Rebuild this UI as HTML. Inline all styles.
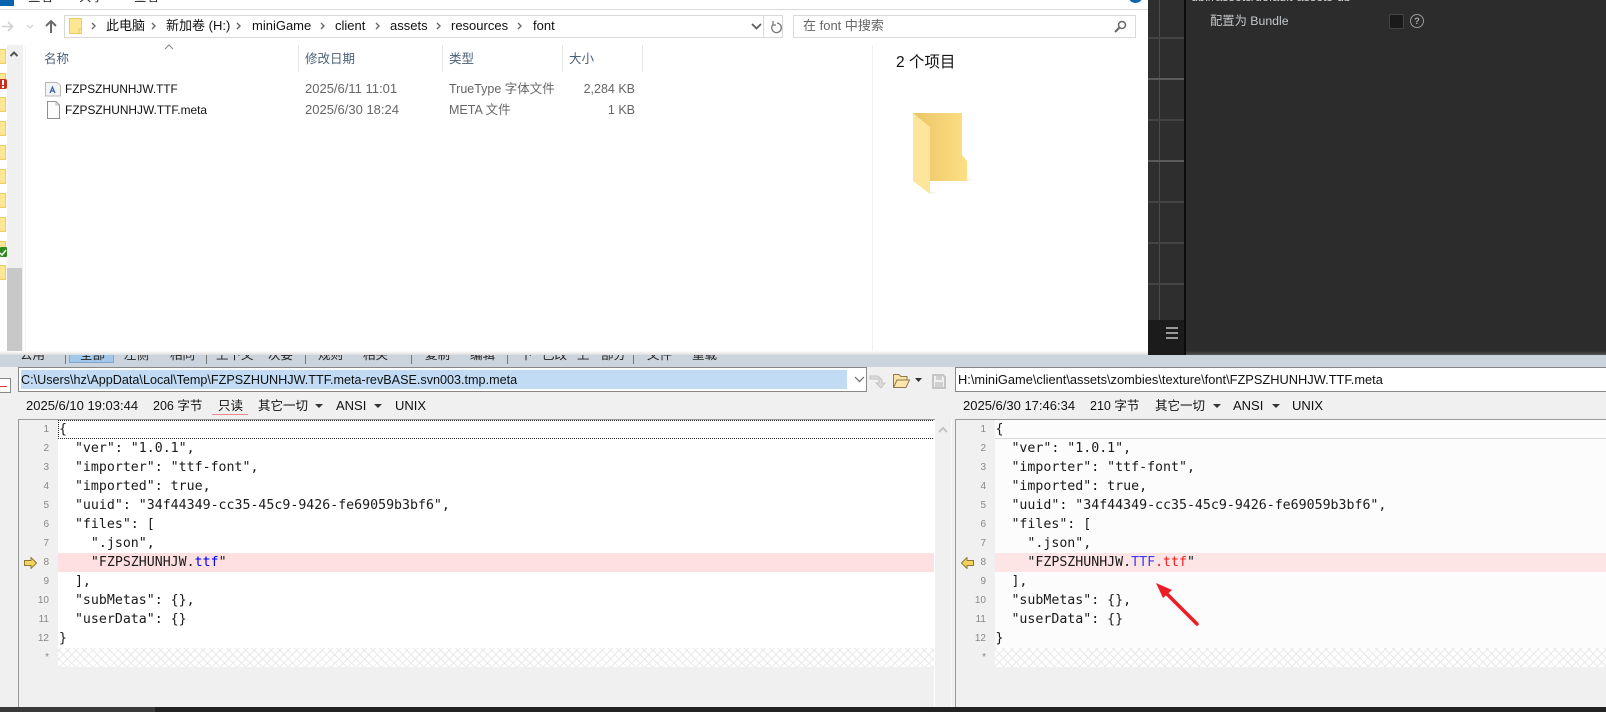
<!DOCTYPE html>
<html><head><meta charset="utf-8"><style>
html,body{margin:0;padding:0;width:1606px;height:712px;overflow:hidden;background:#fff}
body{position:relative;font-family:"Liberation Sans","Noto Sans CJK SC",sans-serif;font-size:12.5px;color:#111}
.a{position:absolute}
.t{position:absolute;white-space:pre;line-height:16px;height:16px}
.g{color:#666}
.h{color:#4c607a}
.c{position:absolute;white-space:pre;font-family:"DejaVu Sans Mono","Liberation Mono",monospace;font-size:13.26px;line-height:19px;height:19px;color:#1a1a1a}
.n{position:absolute;width:20px;text-align:right;font-size:10px;line-height:19px;color:#888}
.s{position:absolute;top:355px;height:7px;overflow:hidden;font-size:12.5px;line-height:0;white-space:pre;color:#222}
.sep{position:absolute;top:355px;width:1px;height:9px;background:#777}
.hatch{position:absolute;height:19px;background-color:#fff;background-image:repeating-linear-gradient(45deg,#e9e9e9 0 1px,transparent 1px 6px),repeating-linear-gradient(-45deg,#e9e9e9 0 1px,transparent 1px 6px)}
.cut{position:absolute;top:0;height:3px;overflow:hidden;white-space:pre;font-size:12.5px;line-height:16px}
.cut span{position:relative;top:-11px;display:block}
.fo{position:absolute;left:0;width:6px;height:15px;background:#fde694;border:solid #eccb62;border-width:1px 1px 1px 0;box-sizing:border-box}
</style></head><body>

<!-- explorer -->
<div class="a" style="left:0;top:0;width:1148px;height:355px;background:#fff"></div>
<div class="a" style="left:0;top:0;width:14px;height:6px;background:#0a64ad"></div>
<div class="cut" style="left:28px;color:#222"><span>查看</span></div>
<div class="cut" style="left:79px;color:#222"><span>共享</span></div>
<div class="cut" style="left:134px;color:#222"><span>查看</span></div>
<div class="a" style="left:0;top:9px;width:1148px;height:1px;background:#d9d9d9"></div>
<div class="a" style="left:1128px;top:-12px;width:15px;height:15px;border-radius:50%;background:#0a64ad"></div>

<svg class="a" style="left:0;top:15px" width="60" height="24" viewBox="0 0 60 24" fill="none">
<path d="M2 11.500H12M8 7l4.500 4.500L8 16" stroke="#cfcfcf" stroke-width="1.600"/>
<path d="M27 10l3 3 3-3" stroke="#d5d5d5" stroke-width="1.300"/>
<path d="M51 18V6M46 11l5-5 5 5" stroke="#6b6b6b" stroke-width="2"/>
</svg>
<div class="a" style="left:64px;top:15px;width:717px;height:21px;border:1px solid #d9d9d9"></div>
<div class="a" style="left:763px;top:16px;width:1px;height:21px;background:#d9d9d9"></div>
<svg class="a" style="left:69px;top:18px" width="13" height="16" viewBox="0 0 13 16"><rect x=".5" y=".5" width="12" height="15" fill="#fde694" stroke="#eccb62"/><path d="M10 15.500V11h2.500" fill="none" stroke="#eccb62"/></svg>
<svg class="a" style="left:88px;top:20px" width="470" height="12" viewBox="0 0 470 12" fill="none" stroke="#666" stroke-width="1.400">
<path d="M4 3l3 3-3 3M64 3l3 3-3 3M149 3l3 3-3 3M233 3l3 3-3 3M288 3l3 3-3 3M349 3l3 3-3 3M430 3l3 3-3 3"/>
</svg>
<div class="t" style="left:106px;top:18px;font-size:13px">此电脑</div>
<div class="t" style="left:166px;top:18px;font-size:13px">新加卷 (H:)</div>
<div class="t" style="left:252px;top:18px;font-size:13px">miniGame</div>
<div class="t" style="left:335px;top:18px;font-size:13px">client</div>
<div class="t" style="left:390px;top:18px;font-size:13px">assets</div>
<div class="t" style="left:451px;top:18px;font-size:13px">resources</div>
<div class="t" style="left:533px;top:18px;font-size:13px">font</div>
<svg class="a" style="left:750px;top:20px" width="34" height="14" viewBox="0 0 34 14" fill="none">
<path d="M2 4l4.500 4.500L11 4" stroke="#555" stroke-width="1.600"/>
<path d="M27 3a4.800 4.800 0 1 1-4 1.500M23 1v4h3" stroke="#777" stroke-width="1.300"/>
</svg>
<div class="a" style="left:793px;top:15px;width:341px;height:21px;border:1px solid #d9d9d9"></div>
<div class="t g" style="left:803px;top:18px;font-size:13px">在 font 中搜索</div>
<svg class="a" style="left:1113px;top:20px" width="14" height="14" viewBox="0 0 14 14" fill="none" stroke="#666"><circle cx="9" cy="5" r="3.500" stroke-width="1.500"/><path d="M6.500 7.500L2 12" stroke-width="2"/></svg>

<!-- left sidebar -->
<div class="fo" style="top:49px"></div>
<div class="fo" style="top:73px"></div>
<div class="a" style="left:0;top:79px;width:7px;height:10px;background:#c8321c;border-radius:0 2px 2px 0"></div>
<div class="a" style="left:2px;top:80px;width:2px;height:5px;background:#fff"></div>
<div class="a" style="left:2px;top:86px;width:2px;height:2px;background:#fff"></div>
<div class="fo" style="top:97px"></div>
<div class="fo" style="top:121px"></div>
<div class="fo" style="top:145px"></div>
<div class="fo" style="top:169px"></div>
<div class="fo" style="top:193px"></div>
<div class="fo" style="top:217px"></div>
<div class="fo" style="top:241px"></div>
<svg class="a" style="left:0;top:247px" width="7" height="10" viewBox="0 0 7 10"><rect width="7" height="10" rx="1" fill="#2d8a1f"/><path d="M0 6l2 2 4-5" fill="none" stroke="#fff" stroke-width="1.500"/></svg>
<div class="fo" style="top:265px"></div>
<div class="a" style="left:7px;top:45px;width:16px;height:310px;background:#f0f0f0"></div>
<div class="a" style="left:7px;top:268px;width:15px;height:87px;background:#c8c8c8"></div>
<svg class="a" style="left:9px;top:50px" width="10" height="8" viewBox="0 0 10 8" fill="none"><path d="M1.500 6l3.500-3.500L8.500 6" stroke="#555" stroke-width="2"/></svg>
<div class="a" style="left:25px;top:45px;width:1px;height:310px;background:#f2f2f2"></div>

<!-- headers -->
<svg class="a" style="left:164px;top:44px" width="10" height="6" viewBox="0 0 10 6" fill="none"><path d="M1 5l4-4 4 4" stroke="#888"/></svg>
<div class="t h" style="left:44px;top:51px;font-size:12.5px">名称</div>
<div class="t h" style="left:305px;top:51px;font-size:12.5px">修改日期</div>
<div class="t h" style="left:449px;top:51px;font-size:12.5px">类型</div>
<div class="t h" style="left:569px;top:51px;font-size:12.5px">大小</div>
<div class="a" style="left:298px;top:45px;width:1px;height:27px;background:#e5e5e5"></div>
<div class="a" style="left:442px;top:45px;width:1px;height:27px;background:#e5e5e5"></div>
<div class="a" style="left:562px;top:45px;width:1px;height:27px;background:#e5e5e5"></div>
<div class="a" style="left:642px;top:45px;width:1px;height:27px;background:#e5e5e5"></div>
<div class="a" style="left:872px;top:45px;width:1px;height:310px;background:#f0f0f0"></div>

<!-- rows -->
<svg class="a" style="left:45px;top:81px" width="16" height="16" viewBox="0 0 16 16"><path d="M.5 1.500H12l3.500 3V15H.5z" fill="#f4f4f6" stroke="#b8b8b8"/><path d="M5 12l2.500-6L10 12M6 10h3" fill="none" stroke="#3a5fb0" stroke-width="1.200"/></svg>
<svg class="a" style="left:47px;top:101px" width="13" height="18" viewBox="0 0 13 18"><path d="M.5.500H9l3.500 3.500V17.500H.5z" fill="#fcfcfc" stroke="#8f8f8f"/><path d="M9 .5V4h3.500" fill="none" stroke="#bbb"/></svg>
<div class="t" style="left:65px;top:81px;font-size:11.8px">FZPSZHUNHJW.TTF</div>
<div class="t" style="left:65px;top:102px;font-size:11.9px">FZPSZHUNHJW.TTF.meta</div>
<div class="t g" style="left:305px;top:81px;font-size:13px">2025/6/11 11:01</div>
<div class="t g" style="left:305px;top:102px;font-size:13px">2025/6/30 18:24</div>
<div class="t g" style="left:449px;top:81px">TrueType 字体文件</div>
<div class="t g" style="left:449px;top:102px">META 文件</div>
<div class="t g" style="left:560px;top:81px;width:75px;text-align:right">2,284 KB</div>
<div class="t g" style="left:560px;top:102px;width:75px;text-align:right">1 KB</div>

<div class="t" style="left:896px;top:54px;font-size:15.500px;line-height:18px;height:18px;color:#111">2 个项目</div>
<svg class="a" style="left:912px;top:113px" width="64" height="84" viewBox="0 0 64 84">
<defs><linearGradient id="f" x1="0" x2="1" y1="0" y2="0"><stop offset="0" stop-color="#e9c566"/><stop offset="1" stop-color="#fedf84"/></linearGradient></defs>
<path d="M1 0H50V42L55 48V68H8V14H1z" fill="url(#f)"/>
<path d="M1 0L18 14V81L1 68z" fill="#fde59c"/>
<path d="M18 81L25 79H18zM55 68L62 66H55z" fill="#f0f0f0"/>
</svg>

<!-- dark -->
<div class="a" style="left:1148px;top:0;width:458px;height:355px;background:#2c2c2c"></div>
<div class="a" style="left:1148px;top:0;width:36px;height:320px;background:#2e2e2e"></div>
<div class="a" style="left:1159px;top:0;width:1px;height:320px;background:#4c4c4c"></div>
<div class="a" style="left:1148px;top:37px;width:36px;height:2px;background:#444"></div>
<div class="a" style="left:1148px;top:78px;width:36px;height:2px;background:#5a5a5a"></div>
<div class="a" style="left:1148px;top:119px;width:36px;height:2px;background:#444"></div>
<div class="a" style="left:1148px;top:160px;width:36px;height:2px;background:#5a5a5a"></div>
<div class="a" style="left:1148px;top:201px;width:36px;height:2px;background:#444"></div>
<div class="a" style="left:1148px;top:242px;width:36px;height:2px;background:#444"></div>
<div class="a" style="left:1148px;top:283px;width:36px;height:2px;background:#444"></div>
<div class="a" style="left:1148px;top:320px;width:36px;height:35px;background:#1b1b1b"></div>
<div class="a" style="left:1166px;top:327px;width:12px;height:2px;background:#999"></div>
<div class="a" style="left:1166px;top:332px;width:12px;height:2px;background:#999"></div>
<div class="a" style="left:1166px;top:337px;width:12px;height:2px;background:#999"></div>
<div class="a" style="left:1184px;top:0;width:2px;height:355px;background:#0b0b0b"></div>
<div class="cut" style="left:1191px;color:#ccc"><span>db://assets/default-assets-db</span></div>
<div class="t" style="left:1210px;top:13px;font-size:12.3px;color:#c4c8cc">配置为 Bundle</div>
<div class="a" style="left:1389px;top:14px;width:13px;height:13px;background:#1a1a1a;border:1px solid #444;border-radius:2px"></div>
<div class="a" style="left:1410px;top:14px;width:12px;height:12px;border:1px solid #999;border-radius:50%;color:#aaa;font-size:9px;line-height:12px;text-align:center;font-weight:bold">?</div>

<!-- shadow and toolbar -->
<div class="a" style="left:0;top:351px;width:1148px;height:4px;background:linear-gradient(#fff,#dcdcdc)"></div>
<div class="a" style="left:1186px;top:351px;width:420px;height:4px;background:linear-gradient(#2c2c2c,#555)"></div>
<div class="a" style="left:0;top:355px;width:1606px;height:12px;background:#cbd3dd"></div>
<div class="a" style="left:69px;top:355px;width:43px;height:7px;background:#a3c7e8;border:solid #7da8d2;border-width:0 1px 1px 1px"></div>
<div class="s" style="left:20px">公用</div><div class="s" style="left:80px">全部</div><div class="s" style="left:124px">左侧</div><div class="s" style="left:170px">相同</div><div class="s" style="left:216px">上下文</div><div class="s" style="left:268px">次要</div><div class="s" style="left:318px">规则</div><div class="s" style="left:363px">相关</div><div class="s" style="left:425px">复制</div><div class="s" style="left:470px">编辑</div><div class="s" style="left:520px">下</div><div class="s" style="left:542px">已改</div><div class="s" style="left:577px">上</div><div class="s" style="left:601px">部分</div><div class="s" style="left:647px">文件</div><div class="s" style="left:692px">重载</div>
<div class="sep" style="left:65px"></div><div class="sep" style="left:206px"></div><div class="sep" style="left:305px"></div><div class="sep" style="left:411px"></div><div class="sep" style="left:507px"></div><div class="sep" style="left:633px"></div>

<!-- file panels -->
<div class="a" style="left:0;top:367px;width:1606px;height:345px;background:#f0f0f0"></div>
<div class="a" style="left:0;top:378px;width:11px;height:15px;background:#fff;border:1px solid #888;border-left:0;box-sizing:border-box"></div>
<div class="a" style="left:0;top:386px;width:7px;height:1px;background:#e33"></div>
<div class="a" style="left:18px;top:367px;width:849px;height:25px;background:#fff;border:1px solid #888;box-sizing:border-box"></div>
<div class="a" style="left:21px;top:370px;width:826px;height:19px;background:#c0dbf3"></div>
<div class="t" style="left:21px;top:372px;font-size:12.62px">C:\Users\hz\AppData\Local\Temp\FZPSZHUNHJW.TTF.meta-revBASE.svn003.tmp.meta</div>
<svg class="a" style="left:852px;top:374px" width="14" height="10" viewBox="0 0 14 10" fill="none"><path d="M3 3l4.500 4.500L12 3" stroke="#666" stroke-width="1.200"/></svg>
<svg class="a" style="left:868px;top:371px" width="88" height="20" viewBox="0 0 88 20">
<path d="M2 5H10L14 9V12H17L13 17L8 12H11V8H2z" fill="#dcdcdc" stroke="#c4c4c4"/>
<path d="M25.500 3.500H31L33 5.500H39V9H29L26.500 16H25.500z" fill="#fbe3a8" stroke="#8c7a50"/><path d="M29 9H41.500L38 16.500H25.500z" fill="#fde6ae" stroke="#8c7a50"/>
<path d="M47 7H54L50.500 11z" fill="#333"/>
<path d="M65 4H75L77 6V17H65z" fill="none" stroke="#c4c4c4" stroke-width="2"/><rect x="68" y="5" width="6" height="4" fill="#d0d0d0"/><rect x="67" y="11" width="8" height="5" fill="#d0d0d0"/>
</svg>
<div class="a" style="left:955px;top:367px;width:651px;height:25px;background:#fff;border:solid #888;border-width:1px 0 1px 1px;box-sizing:border-box"></div>
<div class="t" style="left:958px;top:372px;font-size:12.83px">H:\miniGame\client\assets\zombies\texture\font\FZPSZHUNHJW.TTF.meta</div>

<!-- status left -->
<div class="t" style="left:26px;top:398px;font-size:13px">2025/6/10 19:03:44</div>
<div class="t" style="left:153px;top:398px">206 字节</div>
<div class="t" style="left:218px;top:398px">只读</div>
<div class="a" style="left:212px;top:414px;width:36px;height:1px;background:#f08a8a"></div>
<div class="t" style="left:258px;top:398px">其它一切</div>
<svg class="a" style="left:315px;top:403px" width="72" height="6" viewBox="0 0 72 6"><path d="M0 1H8L4 5zM59 1H67L63 5z" fill="#333"/></svg>
<div class="t" style="left:336px;top:398px;font-size:13px">ANSI</div>
<div class="t" style="left:395px;top:398px;font-size:13px">UNIX</div>
<!-- status right -->
<div class="t" style="left:963px;top:398px;font-size:13px">2025/6/30 17:46:34</div>
<div class="t" style="left:1090px;top:398px">210 字节</div>
<div class="t" style="left:1155px;top:398px">其它一切</div>
<svg class="a" style="left:1213px;top:403px" width="72" height="6" viewBox="0 0 72 6"><path d="M0 1H8L4 5zM59 1H67L63 5z" fill="#333"/></svg>
<div class="t" style="left:1233px;top:398px;font-size:13px">ANSI</div>
<div class="t" style="left:1292px;top:398px;font-size:13px">UNIX</div>

<!-- editors -->
<div class="a" style="left:18px;top:419px;width:1px;height:288px;background:#999"></div>
<div class="a" style="left:18px;top:419px;width:917px;height:1px;background:#999"></div>
<div class="a" style="left:58px;top:420px;width:877px;height:228px;background:#fff"></div>
<div class="a" style="left:58px;top:553px;width:876px;height:19px;background:#ffe0e0"></div>
<div class="a" style="left:58px;top:420px;width:875px;height:17px;border:1px dotted #222"></div>
<div class="hatch" style="left:58px;top:648px;width:876px"></div>
<div class="a" style="left:934px;top:420px;width:1px;height:287px;background:#fff"></div>
<div class="a" style="left:951px;top:420px;width:1px;height:287px;background:#fafafa"></div>
<svg class="a" style="left:937px;top:426px" width="12" height="8" viewBox="0 0 12 8" fill="none"><path d="M2 6l4-4 4 4" stroke="#c4c4c4" stroke-width="2"/></svg>

<div class="a" style="left:955px;top:419px;width:1px;height:288px;background:#999"></div>
<div class="a" style="left:955px;top:419px;width:651px;height:1px;background:#999"></div>
<div class="a" style="left:995px;top:420px;width:611px;height:228px;background:#fcfcfc"></div>
<div class="a" style="left:995px;top:553px;width:611px;height:19px;background:#fde5e5"></div>
<div class="a" style="left:995px;top:438px;width:611px;height:1px;background:#d9d9d9"></div>
<div class="hatch" style="left:995px;top:648px;width:611px"></div>

<!-- line numbers left -->
<div class="n" style="left:29px;top:420px">1</div><div class="n" style="left:29px;top:439px">2</div><div class="n" style="left:29px;top:458px">3</div><div class="n" style="left:29px;top:477px">4</div><div class="n" style="left:29px;top:496px">5</div><div class="n" style="left:29px;top:515px">6</div><div class="n" style="left:29px;top:534px">7</div><div class="n" style="left:29px;top:553px">8</div><div class="n" style="left:29px;top:572px">9</div><div class="n" style="left:29px;top:591px">10</div><div class="n" style="left:29px;top:610px">11</div><div class="n" style="left:29px;top:629px">12</div><div class="n" style="left:29px;top:648px">*</div>
<!-- line numbers right -->
<div class="n" style="left:966px;top:420px">1</div><div class="n" style="left:966px;top:439px">2</div><div class="n" style="left:966px;top:458px">3</div><div class="n" style="left:966px;top:477px">4</div><div class="n" style="left:966px;top:496px">5</div><div class="n" style="left:966px;top:515px">6</div><div class="n" style="left:966px;top:534px">7</div><div class="n" style="left:966px;top:553px">8</div><div class="n" style="left:966px;top:572px">9</div><div class="n" style="left:966px;top:591px">10</div><div class="n" style="left:966px;top:610px">11</div><div class="n" style="left:966px;top:629px">12</div><div class="n" style="left:966px;top:648px">*</div>

<!-- arrows -->
<svg class="a" style="left:24px;top:557px" width="13" height="12" viewBox="0 0 13 12"><path d="M.5 3.500H7V.5L12.500 6 7 11.500V8.500H.5z" fill="#f5d259" stroke="#8a7a3a"/></svg>
<svg class="a" style="left:961px;top:557px" width="13" height="12" viewBox="0 0 13 12"><path d="M12.500 3.500H6V.5L.5 6 6 11.500V8.500H12.500z" fill="#f5d259" stroke="#8a7a3a"/></svg>

<!-- code left -->
<div class="c" style="left:59px;top:420px">{</div>
<div class="c" style="left:59px;top:439px">  "ver": "1.0.1",</div>
<div class="c" style="left:59px;top:458px">  "importer": "ttf-font",</div>
<div class="c" style="left:59px;top:477px">  "imported": true,</div>
<div class="c" style="left:59px;top:496px">  "uuid": "34f44349-cc35-45c9-9426-fe69059b3bf6",</div>
<div class="c" style="left:59px;top:515px">  "files": [</div>
<div class="c" style="left:59px;top:534px">    ".json",</div>
<div class="c" style="left:59px;top:553px">    "FZPSZHUNHJW.<span style="color:#0000ff">ttf</span>"</div>
<div class="c" style="left:59px;top:572px">  ],</div>
<div class="c" style="left:59px;top:591px">  "subMetas": {},</div>
<div class="c" style="left:59px;top:610px">  "userData": {}</div>
<div class="c" style="left:59px;top:629px">}</div>
<!-- code right -->
<div class="c" style="left:995.500px;top:420px">{</div>
<div class="c" style="left:995.500px;top:439px">  "ver": "1.0.1",</div>
<div class="c" style="left:995.500px;top:458px">  "importer": "ttf-font",</div>
<div class="c" style="left:995.500px;top:477px">  "imported": true,</div>
<div class="c" style="left:995.500px;top:496px">  "uuid": "34f44349-cc35-45c9-9426-fe69059b3bf6",</div>
<div class="c" style="left:995.500px;top:515px">  "files": [</div>
<div class="c" style="left:995.500px;top:534px">    ".json",</div>
<div class="c" style="left:995.500px;top:553px">    "FZPSZHUNHJW.<span style="color:#3a3aff">TTF</span><span style="color:#f02020">.ttf</span>"</div>
<div class="c" style="left:995.500px;top:572px">  ],</div>
<div class="c" style="left:995.500px;top:591px">  "subMetas": {},</div>
<div class="c" style="left:995.500px;top:610px">  "userData": {}</div>
<div class="c" style="left:995.500px;top:629px">}</div>

<!-- red annotation arrow -->
<svg class="a" style="left:1150px;top:578px" width="56" height="52" viewBox="0 0 56 52"><path d="M47 46L15 14" stroke="#ee1c25" stroke-width="3.500" stroke-linecap="round"/><path d="M6 5L22 12L13 20z" fill="#ee1c25"/></svg>

<!-- bottom bar -->
<div class="a" style="left:0;top:707px;width:155px;height:5px;background:#3a3a3a"></div>
<div class="a" style="left:155px;top:707px;width:1451px;height:5px;background:#222"></div>
</body></html>
